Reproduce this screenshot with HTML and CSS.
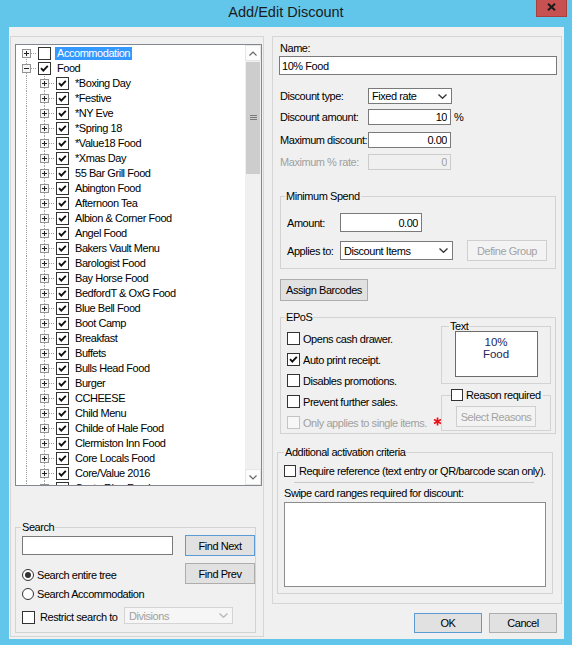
FILE: index.html
```html
<!DOCTYPE html>
<html>
<head>
<meta charset="utf-8">
<title>Add/Edit Discount</title>
<link rel="stylesheet" href="styles.css">
</head>
<body>
<svg class="defs" width="0" height="0" aria-hidden="true">
  <symbol id="ck" viewBox="0 0 11 11"><polyline points="2,5.2 4.3,7.6 8.8,2.8" fill="none" stroke="#111" stroke-width="1.9"/></symbol>
  <symbol id="chev" viewBox="0 0 9 5"><polyline points="0.5,0.5 4.5,4.3 8.5,0.5" fill="none" stroke="currentColor" stroke-width="1.3"/></symbol>
</svg>
<div class="window">
  <div class="titlebar">
    <span class="title">Add/Edit Discount</span>
    <span class="close"><svg width="9" height="8" viewBox="0 0 9 8"><path d="M1 0.8 L8 7.2 M8 0.8 L1 7.2" stroke="#1a1a1a" stroke-width="2"/></svg></span>
  </div>
  <div class="client">
    <div class="left-panel">
      <div class="tree">
        <div class="tree-list">
          <div class="row"><span class="cell t-top"><i class="exp"></i></span><span class="cb"></span><span class="lbl sel">Accommodation</span></div>
          <div class="row"><span class="cell t-tee"><i class="exp minus"></i></span><span class="cb"><svg><use href="#ck"/></svg></span><span class="lbl">Food</span></div>
          <div class="row"><span class="cell t-v"></span><span class="cell t-tee"><i class="exp"></i></span><span class="cb"><svg><use href="#ck"/></svg></span><span class="lbl">*Boxing Day</span></div>
          <div class="row"><span class="cell t-v"></span><span class="cell t-tee"><i class="exp"></i></span><span class="cb"><svg><use href="#ck"/></svg></span><span class="lbl">*Festive</span></div>
          <div class="row"><span class="cell t-v"></span><span class="cell t-tee"><i class="exp"></i></span><span class="cb"><svg><use href="#ck"/></svg></span><span class="lbl">*NY Eve</span></div>
          <div class="row"><span class="cell t-v"></span><span class="cell t-tee"><i class="exp"></i></span><span class="cb"><svg><use href="#ck"/></svg></span><span class="lbl">*Spring 18</span></div>
          <div class="row"><span class="cell t-v"></span><span class="cell t-tee"><i class="exp"></i></span><span class="cb"><svg><use href="#ck"/></svg></span><span class="lbl">*Value18 Food</span></div>
          <div class="row"><span class="cell t-v"></span><span class="cell t-tee"><i class="exp"></i></span><span class="cb"><svg><use href="#ck"/></svg></span><span class="lbl">*Xmas Day</span></div>
          <div class="row"><span class="cell t-v"></span><span class="cell t-tee"><i class="exp"></i></span><span class="cb"><svg><use href="#ck"/></svg></span><span class="lbl">55 Bar Grill Food</span></div>
          <div class="row"><span class="cell t-v"></span><span class="cell t-tee"><i class="exp"></i></span><span class="cb"><svg><use href="#ck"/></svg></span><span class="lbl">Abington Food</span></div>
          <div class="row"><span class="cell t-v"></span><span class="cell t-tee"><i class="exp"></i></span><span class="cb"><svg><use href="#ck"/></svg></span><span class="lbl">Afternoon Tea</span></div>
          <div class="row"><span class="cell t-v"></span><span class="cell t-tee"><i class="exp"></i></span><span class="cb"><svg><use href="#ck"/></svg></span><span class="lbl">Albion &amp; Corner Food</span></div>
          <div class="row"><span class="cell t-v"></span><span class="cell t-tee"><i class="exp"></i></span><span class="cb"><svg><use href="#ck"/></svg></span><span class="lbl">Angel Food</span></div>
          <div class="row"><span class="cell t-v"></span><span class="cell t-tee"><i class="exp"></i></span><span class="cb"><svg><use href="#ck"/></svg></span><span class="lbl">Bakers Vault Menu</span></div>
          <div class="row"><span class="cell t-v"></span><span class="cell t-tee"><i class="exp"></i></span><span class="cb"><svg><use href="#ck"/></svg></span><span class="lbl">Barologist Food</span></div>
          <div class="row"><span class="cell t-v"></span><span class="cell t-tee"><i class="exp"></i></span><span class="cb"><svg><use href="#ck"/></svg></span><span class="lbl">Bay Horse Food</span></div>
          <div class="row"><span class="cell t-v"></span><span class="cell t-tee"><i class="exp"></i></span><span class="cb"><svg><use href="#ck"/></svg></span><span class="lbl">BedfordT &amp; OxG Food</span></div>
          <div class="row"><span class="cell t-v"></span><span class="cell t-tee"><i class="exp"></i></span><span class="cb"><svg><use href="#ck"/></svg></span><span class="lbl">Blue Bell Food</span></div>
          <div class="row"><span class="cell t-v"></span><span class="cell t-tee"><i class="exp"></i></span><span class="cb"><svg><use href="#ck"/></svg></span><span class="lbl">Boot Camp</span></div>
          <div class="row"><span class="cell t-v"></span><span class="cell t-tee"><i class="exp"></i></span><span class="cb"><svg><use href="#ck"/></svg></span><span class="lbl">Breakfast</span></div>
          <div class="row"><span class="cell t-v"></span><span class="cell t-tee"><i class="exp"></i></span><span class="cb"><svg><use href="#ck"/></svg></span><span class="lbl">Buffets</span></div>
          <div class="row"><span class="cell t-v"></span><span class="cell t-tee"><i class="exp"></i></span><span class="cb"><svg><use href="#ck"/></svg></span><span class="lbl">Bulls Head Food</span></div>
          <div class="row"><span class="cell t-v"></span><span class="cell t-tee"><i class="exp"></i></span><span class="cb"><svg><use href="#ck"/></svg></span><span class="lbl">Burger</span></div>
          <div class="row"><span class="cell t-v"></span><span class="cell t-tee"><i class="exp"></i></span><span class="cb"><svg><use href="#ck"/></svg></span><span class="lbl">CCHEESE</span></div>
          <div class="row"><span class="cell t-v"></span><span class="cell t-tee"><i class="exp"></i></span><span class="cb"><svg><use href="#ck"/></svg></span><span class="lbl">Child Menu</span></div>
          <div class="row"><span class="cell t-v"></span><span class="cell t-tee"><i class="exp"></i></span><span class="cb"><svg><use href="#ck"/></svg></span><span class="lbl">Childe of Hale Food</span></div>
          <div class="row"><span class="cell t-v"></span><span class="cell t-tee"><i class="exp"></i></span><span class="cb"><svg><use href="#ck"/></svg></span><span class="lbl">Clermiston Inn Food</span></div>
          <div class="row"><span class="cell t-v"></span><span class="cell t-tee"><i class="exp"></i></span><span class="cb"><svg><use href="#ck"/></svg></span><span class="lbl">Core Locals Food</span></div>
          <div class="row"><span class="cell t-v"></span><span class="cell t-tee"><i class="exp"></i></span><span class="cb"><svg><use href="#ck"/></svg></span><span class="lbl">Core/Value 2016</span></div>
          <div class="row"><span class="cell t-v"></span><span class="cell t-tee"><i class="exp"></i></span><span class="cb"><svg><use href="#ck"/></svg></span><span class="lbl">Costa Rica Food</span></div>
        </div>
        <div class="vscroll">
          <div class="sb-btn"><svg width="8" height="5" viewBox="0 0 8 5"><polyline points="0.5,4.5 4,1 7.5,4.5" fill="none" stroke="#606060" stroke-width="1.1"/></svg></div>
          <div class="sb-thumb"><svg width="7" height="6" viewBox="0 0 7 6"><path d="M0 0.5h7M0 2.5h7M0 4.5h7" stroke="#7a7a7a" stroke-width="1"/></svg></div>
          <div class="sb-track"></div>
          <div class="sb-btn"><svg width="8" height="5" viewBox="0 0 8 5"><polyline points="0.5,0.5 4,4 7.5,0.5" fill="none" stroke="#606060" stroke-width="1.1"/></svg></div>
        </div>
      </div>
      <fieldset class="group search">
        <legend>Search</legend>
        <div class="s-row r1">
          <input class="field s-input" type="text" value="">
          <button class="btn default s-btn">Find Next</button>
        </div>
        <div class="s-row r2">
          <span class="opt pad"><span class="radio on"></span><span class="opt-text">Search entire tree</span></span>
          <button class="btn s-btn">Find Prev</button>
        </div>
        <div class="s-row r3">
          <span class="opt"><span class="radio"></span><span class="opt-text">Search Accommodation</span></span>
        </div>
        <div class="s-row r4">
          <span class="opt restrict"><span class="cb"></span><span class="opt-text">Restrict search to</span></span>
          <div class="combo dis div-combo"><span>Divisions</span><svg class="chev"><use href="#chev"/></svg></div>
        </div>
      </fieldset>
    </div>

    <div class="right-col">
      <div class="right-panel">
        <div class="name-label">Name:</div>
        <input class="field name-input" type="text" value="10% Food" readonly>
        <div class="frow f1"><span class="flabel">Discount type:</span><div class="combo type-combo"><span>Fixed rate</span><svg class="chev"><use href="#chev"/></svg></div></div>
        <div class="frow f2"><span class="flabel">Discount amount:</span><input class="field num amt" type="text" value="10" readonly><span class="pct">%</span></div>
        <div class="frow f3"><span class="flabel">Maximum discount:</span><input class="field num amt" type="text" value="0.00" readonly></div>
        <div class="frow f4 disabled"><span class="flabel">Maximum % rate:</span><input class="field num amt dis" type="text" value="0" disabled></div>

        <fieldset class="group minspend">
          <legend>Minimum Spend</legend>
          <div class="ms-body">
            <div class="mrow m1"><span class="mlabel">Amount:</span><input class="field num ms-amt" type="text" value="0.00" readonly></div>
            <div class="mrow m2"><span class="mlabel">Applies to:</span><div class="combo ms-combo"><span>Discount Items</span><svg class="chev"><use href="#chev"/></svg></div><button class="btn dis define" disabled>Define Group</button></div>
          </div>
        </fieldset>

        <button class="btn assign">Assign Barcodes</button>

        <fieldset class="group epos">
          <legend>EPoS</legend>
          <div class="epos-body">
            <div class="epos-checks">
              <div class="crow"><span class="cb"></span><span class="opt-text">Opens cash drawer.</span></div>
              <div class="crow"><span class="cb"><svg><use href="#ck"/></svg></span><span class="opt-text">Auto print receipt.</span></div>
              <div class="crow"><span class="cb"></span><span class="opt-text">Disables promotions.</span></div>
              <div class="crow"><span class="cb"></span><span class="opt-text">Prevent further sales.</span></div>
              <div class="crow disabled"><span class="cb dis"></span><span class="opt-text">Only applies to single items.</span><svg class="star" width="9" height="9" viewBox="0 0 9 9"><path d="M4.5 0.5v8M1 2.5l7 4M8 2.5l-7 4" stroke="#e8121b" stroke-width="1.7"/></svg></div>
            </div>
            <div class="epos-side">
              <fieldset class="group textgrp">
                <legend>Text</legend>
                <div class="pos-text">10%<br>Food</div>
              </fieldset>
              <fieldset class="group reason">
                <legend><span class="cb"></span><span class="opt-text">Reason required</span></legend>
                <button class="btn dis sel-reasons" disabled>Select Reasons</button>
              </fieldset>
            </div>
          </div>
        </fieldset>

        <fieldset class="group additional">
          <legend>Additional activation criteria</legend>
          <div class="add-body">
            <div class="arow"><span class="cb"></span><span class="opt-text">Require reference (text entry or QR/barcode scan only).</span></div>
            <div class="sep"></div>
            <div class="swipe-label">Swipe card ranges required for discount:</div>
            <textarea class="swipe" readonly></textarea>
          </div>
        </fieldset>
      </div>
      <div class="dialog-buttons">
        <button class="btn default dlg">OK</button>
        <button class="btn dlg">Cancel</button>
      </div>
    </div>
  </div>
</div>
</body>
</html>
```
FILE: styles.css
```css
:root {
  --vd: repeating-linear-gradient(to bottom, #a3a3a3 0 1px, transparent 1px 2px);
  --hd: repeating-linear-gradient(to right, #a3a3a3 0 1px, transparent 1px 2px);
}

html, body {
  margin: 0;
  padding: 0;
}

body {
  width: 572px;
  height: 645px;
  overflow: hidden;
  background: #62c6ea;
  font-family: "Liberation Sans", Arial, sans-serif;
  font-size: 11px;
  letter-spacing: -0.45px;
  line-height: 14px;
  color: #000;
}

.defs {
  display: block;
  width: 0;
  height: 0;
  overflow: hidden;
}

/* ---------- window chrome ---------- */
.titlebar {
  height: 27px;
  display: grid;
  grid-template-columns: 1fr auto 1fr;
  align-items: start;
}

.title {
  grid-column: 2;
  font-family: "Liberation Sans", Arial, sans-serif;
  font-size: 14.5px;
  letter-spacing: 0;
  line-height: 18px;
  padding-top: 3px;
  color: #1b1b1b;
}

.close {
  grid-column: 3;
  justify-self: end;
  margin-right: 5px;
  width: 31px;
  height: 17px;
  box-sizing: border-box;
  background: #c75050;
  border: 1px solid #a84040;
  border-top: 0;
  display: flex;
  justify-content: center;
  align-items: flex-start;
  padding-top: 3px;
}

.close svg { display: block; }

.client {
  margin-left: 9px;
  width: 555px;
  height: 612px;
  box-sizing: border-box;
  background: #f0f0f0;
  padding: 9px 0 0 1px;
  display: flex;
}

/* ---------- common controls ---------- */
.field {
  font: inherit;
  letter-spacing: inherit;
  margin: 0;
  box-sizing: border-box;
  border: 1px solid #7a7a7a;
  background: #fff;
  color: #000;
  padding: 0 2px;
  outline: none;
}

.field.num { text-align: right; padding-right: 3px; }

.field.dis {
  border-color: #cccccc;
  background: #f0f0f0;
  color: #a0a0a0;
  -webkit-text-fill-color: #a0a0a0;
  opacity: 1;
}

.btn {
  font: inherit;
  letter-spacing: inherit;
  white-space: nowrap;
  margin: 0;
  padding: 0;
  box-sizing: border-box;
  height: 21px;
  background: #e1e1e1;
  border: 1px solid #adadad;
  color: #000;
}

.btn.default { border-color: #5b9bd5; }

.btn.dis {
  background: #f3f3f3;
  border-color: #cfcfcf;
  color: #a3a3a3;
}

.combo {
  box-sizing: border-box;
  border: 1px solid #7a7a7a;
  background: #fff;
  display: flex;
  align-items: center;
  justify-content: space-between;
  padding: 0 4px 0 3px;
  color: #000;
  white-space: nowrap;
}

.combo .chev {
  width: 9px;
  height: 5px;
  color: #333;
  flex: none;
}

.combo.dis {
  border-color: #d4d4d4;
  background: #f6f6f6;
  color: #a0a0a0;
}

.combo.dis .chev { color: #b8b8b8; }

.cb {
  width: 13px;
  height: 13px;
  box-sizing: border-box;
  border: 1px solid #333;
  background: #fff;
  display: inline-flex;
  flex: none;
}

.cb svg {
  width: 11px;
  height: 11px;
  display: block;
}

.cb.dis {
  border-color: #c4c4c4;
  background: #f7f7f7;
}

.radio {
  width: 12px;
  height: 12px;
  box-sizing: border-box;
  border: 1px solid #333;
  border-radius: 50%;
  background: #fff;
  display: inline-flex;
  align-items: center;
  justify-content: center;
  flex: none;
}

.radio.on::after {
  content: "";
  width: 6px;
  height: 6px;
  border-radius: 50%;
  background: #333;
}

.opt {
  display: flex;
  align-items: center;
}

.opt-text { margin-left: 3px; white-space: nowrap; }

.disabled { color: #a0a0a0; }

.group {
  margin: 0;
  padding: 0;
  box-sizing: border-box;
  border: 1px solid #d3d3d3;
  min-width: 0;
}

.group > legend {
  padding: 0 1px;
  margin-left: 5px;
  line-height: 14px;
  white-space: nowrap;
}

/* ---------- left panel ---------- */
.left-panel {
  width: 254px;
  height: 601px;
  box-sizing: border-box;
  border: 1px solid #d6d6d6;
  padding: 7px 1px 0 4px;
  display: flex;
  flex-direction: column;
  flex: none;
}

.tree {
  height: 442px;
  box-sizing: border-box;
  border: 1px solid #828790;
  background: #fff;
  display: flex;
  flex: none;
}

.tree-list {
  flex: 1;
  overflow: hidden;
  padding-top: 1px;
}

.row {
  height: 15px;
  display: flex;
  align-items: center;
  padding-left: 2px;
}

.cell {
  width: 18px;
  height: 15px;
  flex: none;
  display: flex;
  align-items: center;
}

.t-v { background: var(--vd) 8px 0 / 1px 15px no-repeat; }

.t-tee {
  background:
    var(--hd) 9px 7px / 9px 1px no-repeat,
    var(--vd) 8px 0 / 1px 15px no-repeat;
}

.t-top {
  background:
    var(--hd) 9px 7px / 9px 1px no-repeat,
    var(--vd) 8px 7px / 1px 8px no-repeat;
}

.exp {
  width: 9px;
  height: 9px;
  box-sizing: border-box;
  margin-left: 4px;
  border: 1px solid #939393;
  background:
    linear-gradient(#222, #222) center / 5px 1px no-repeat,
    linear-gradient(#222, #222) center / 1px 5px no-repeat,
    #f6f6f6;
}

.exp.minus {
  background:
    linear-gradient(#222, #222) center / 5px 1px no-repeat,
    #f6f6f6;
}

.row .cb { margin-left: 2px; }

.lbl {
  margin-left: 4px;
  padding: 0 2px;
  line-height: 13px;
  white-space: nowrap;
}

.lbl.sel {
  background: #3399ff;
  color: #fff;
}

.vscroll {
  width: 16px;
  flex: none;
  background: #f0f0f0;
  display: flex;
  flex-direction: column;
}

.sb-btn {
  height: 16px;
  box-sizing: border-box;
  background: #fcfcfc;
  border: 1px solid #e6e6e6;
  display: flex;
  align-items: center;
  justify-content: center;
  flex: none;
}

.sb-thumb {
  height: 112px;
  margin: 1px 1px 0;
  background: #cdcdcd;
  display: flex;
  align-items: center;
  justify-content: center;
  flex: none;
}

.sb-track { flex: 1; }

.search {
  margin-top: 34px;
  width: 241px;
  height: 113px;
}

.search > legend { margin-left: 5px; }

.s-row {
  display: flex;
  align-items: center;
  padding-left: 6px;
}

.s-row.r1 { margin-top: 1px; height: 21px; }
.s-row.r2 { margin-top: 7px; height: 21px; }
.s-row.r3 { margin-top: 3px; height: 14px; }
.s-row.r4 { margin-top: 6px; height: 17px; align-items: flex-end; }

.s-input {
  width: 151px;
  height: 19px;
}

.s-btn {
  width: 70px;
  margin-left: auto;
}

.opt.pad { padding-top: 3px; }

.restrict {
  width: 102px;
  flex: none;
}

.restrict .opt-text { margin-left: 5px; }

.div-combo {
  width: 109px;
  height: 17px;
  padding-left: 4px;
}

/* ---------- right side ---------- */
.right-col {
  margin-left: 8px;
  width: 290px;
  display: flex;
  flex-direction: column;
  flex: none;
}

.right-panel {
  height: 568px;
  box-sizing: border-box;
  border: 1px solid #d6d6d6;
  padding: 4px 4px 0 6px;
  display: flex;
  flex-direction: column;
  align-items: flex-start;
}

.name-label { height: 14px; padding-left: 1px; }

.name-input {
  margin-top: 1px;
  width: 278px;
  height: 19px;
}

.frow {
  display: flex;
  align-items: center;
  height: 16px;
}

.frow.f1 { margin-top: 13px; }
.frow.f2 { margin-top: 5px; }
.frow.f3 { margin-top: 7px; }
.frow.f4 { margin-top: 6px; }

.flabel {
  width: 88px;
  padding-left: 1px;
  white-space: nowrap;
  flex: none;
}

.type-combo { width: 84px; height: 16px; }

.amt { width: 83px; height: 16px; }

.pct { margin-left: 3px; }

.minspend {
  margin: 19px 0 0 1px;
  width: 276px;
  height: 80px;
}

.minspend > legend { margin-left: 4px; }

.ms-body { padding-left: 6px; }

.mrow {
  display: flex;
  align-items: center;
}

.mrow.m1 { margin-top: 10px; height: 19px; }
.mrow.m2 { margin-top: 8px; height: 21px; }

.mlabel { width: 53px; white-space: nowrap; flex: none; }

.ms-amt { width: 82px; height: 19px; }

.ms-combo { width: 113px; height: 19px; }

.define {
  width: 80px;
  margin-left: 14px;
}

.assign {
  margin: 10px 0 0 1px;
  width: 88px;
  height: 22px;
}

.epos {
  margin: 9px 0 0 1px;
  width: 276px;
  height: 124px;
}

.epos > legend { margin-left: 4px; }

.epos-body {
  display: flex;
  padding-left: 6px;
}

.epos-checks {
  margin-top: 4px;
  flex: 1;
  min-width: 0;
}

.crow {
  height: 21px;
  display: flex;
  align-items: center;
}

.star { margin-left: 6px; margin-top: -2px; flex: none; }

.epos-side {
  width: 110px;
  flex: none;
  margin: -5px 4px 0 0;
  display: flex;
  flex-direction: column;
}

.textgrp { height: 65px; }

.textgrp > legend { margin-left: 7px; }

.pos-text {
  width: 83px;
  height: 46px;
  box-sizing: border-box;
  margin: -2px auto 0;
  border: 1px solid #6b6b6b;
  background: #fff;
  padding-top: 4px;
  text-align: center;
  font-family: "Liberation Sans", Arial, sans-serif;
  font-size: 11.5px;
  letter-spacing: 0;
  line-height: 12px;
  color: #25255c;
}

.reason {
  margin-top: 4px;
  height: 43px;
}

.reason > legend {
  margin-left: 9px;
  display: flex;
  align-items: center;
  padding: 0 2px 0 0;
}

.reason > legend .cb { width: 12px; height: 12px; }

.sel-reasons {
  width: 80px;
  margin: 4px 0 0 14px;
}

.additional {
  margin: 11px 0 0 -2px;
  width: 276px;
  height: 149px;
}

.additional > legend { margin-left: 6px; }

.add-body { padding-left: 6px; }

.arow {
  margin-top: 5px;
  height: 14px;
  display: flex;
  align-items: center;
}

.arow .cb { width: 12px; height: 12px; }

.sep {
  margin: 4px 0 0 10px;
  width: 240px;
  border-top: 1px solid #c9c9c9;
}

.swipe-label {
  margin-top: 3px;
  height: 14px;
}

.swipe {
  display: block;
  margin: 2px 0 0;
  width: 262px;
  height: 85px;
  box-sizing: border-box;
  border: 1px solid #8c8c8c;
  background: #fff;
  resize: none;
  outline: none;
  font: inherit;
}

.dialog-buttons {
  margin-top: 9px;
  padding-right: 5px;
  display: flex;
  justify-content: flex-end;
  gap: 7px;
}

.dlg {
  width: 68px;
  height: 20px;
}
```
